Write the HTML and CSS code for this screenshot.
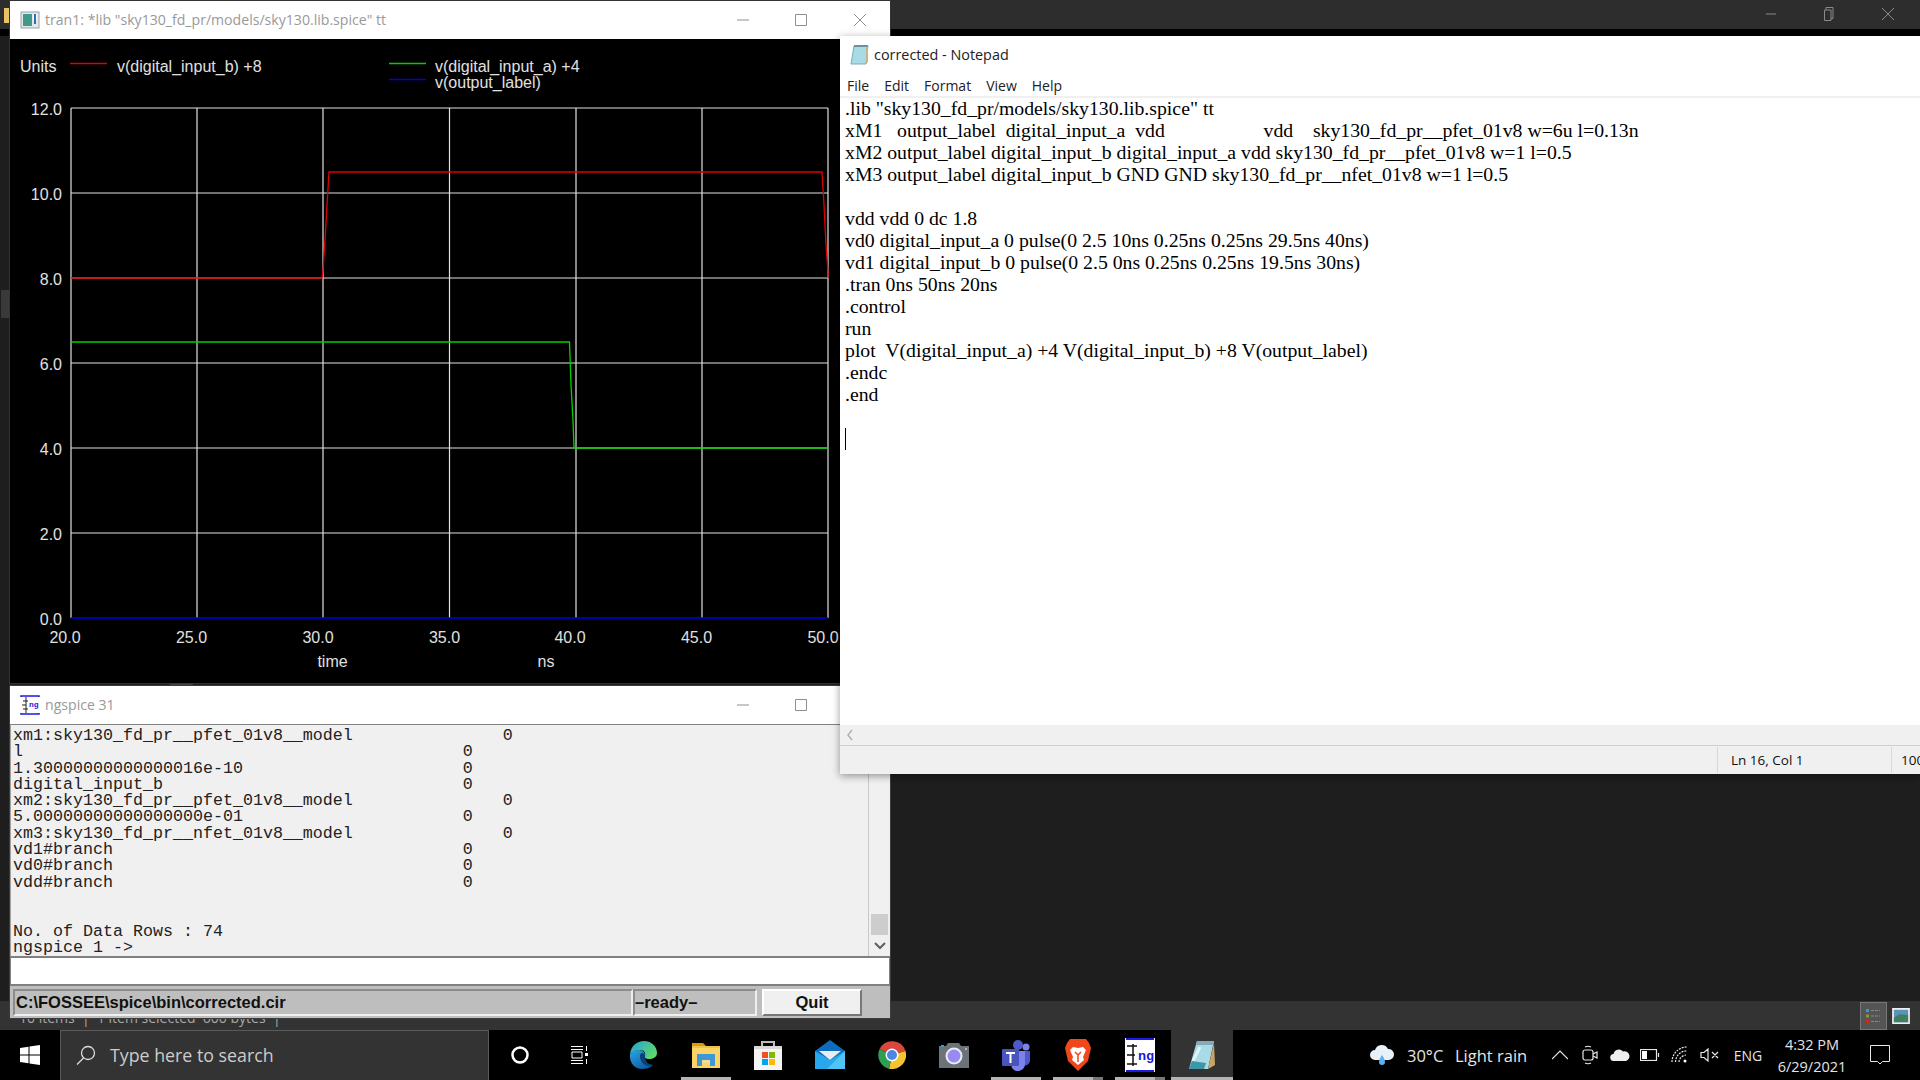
FILE: index.html
```html
<!DOCTYPE html>
<html lang="en">
<head>
  <meta charset="UTF-8">
  <title>ngspice and Notepad</title>
  <link rel="stylesheet" href="styles.css">
</head>
<body>
<div class="desktop">

  <!-- explorer window sitting behind everything -->
  <div class="explorer">
    <div class="explorer-title">
      <svg class="ctl ctl-min" viewBox="0 0 12 12"><path d="M1 6h10" /></svg>
      <svg class="ctl ctl-restore" viewBox="0 0 12 14"><path d="M3 3V.5h7v11H8M1.500 3H8v10.500H1.500z" /></svg>
      <svg class="ctl ctl-close" viewBox="0 0 12 12"><path d="M0 0l12 12M12 0L0 12" /></svg>
    </div>
    <div class="explorer-strip"></div>
    <div class="explorer-side"><span class="side-folder"></span><span class="side-thumb"></span><span class="side-grip"></span></div>
    <div class="explorer-status">
      <span class="status-text">10 items &nbsp;|&nbsp; 1 item selected &nbsp;600 bytes &nbsp;|</span>
      <span class="view-btn view-on">
        <svg viewBox="0 0 20 20" width="20" height="20"><rect x="3" y="3" width="3" height="3" fill="#4a90d0"/><rect x="3" y="8.5" width="3" height="3" fill="#8a9a30"/><rect x="3" y="14" width="3" height="3" fill="#c03020"/><path d="M8 4.500h9M8 10h9M8 15.500h9" stroke="#888" stroke-dasharray="3 1"/></svg>
      </span>
      <span class="view-btn view-pic">
        <svg viewBox="0 0 20 18" width="18" height="16"><rect width="20" height="18" fill="#eee"/><rect x="2" y="2" width="16" height="14" fill="#5a94b8"/><path d="M2 11l6-4 10 1v8H2z" fill="#3f7f60"/></svg>
      </span>
    </div>
  </div>

  <!-- plot window -->
  <div class="win win-plot">
    <div class="titlebar">
      <svg class="title-icon" viewBox="0 0 20 20"><rect x="1" y="2" width="18" height="16" fill="#e4e6e8" stroke="#9aa2a8"/><rect x="3" y="4" width="9" height="12" fill="#3f9a8c"/><rect x="13" y="4" width="4" height="6" fill="#fff"/><rect x="14" y="4" width="2" height="10" fill="#2c6fb0"/></svg>
      <span class="title-text">tran1: *lib "sky130_fd_pr/models/sky130.lib.spice" tt</span>
      <svg class="ctl ctl-min dark" viewBox="0 0 12 12"><path d="M0 6h12" /></svg>
      <svg class="ctl ctl-max dark" viewBox="0 0 12 12"><path d="M.5.500h11v11H.5z" /></svg>
      <svg class="ctl ctl-x dark" viewBox="0 0 12 12"><path d="M0 0l12 12M12 0L0 12" /></svg>
    </div>
    <svg class="plot" viewBox="10 39 880 644" width="880" height="644">
      <g class="grid">
        <path d="M71 108H828M71 193H828M71 278H828M71 363H828M71 448H828M71 533H828" />
        <path d="M71 108V618M197 108V618M323 108V618M449.500 108V618M576 108V618M702 108V618M828 108V618" />
      </g>
      <path class="trace red" d="M71 278H322L323 270 325 240 327 205 329 172H822L824 205 826 245 828 272V278" />
      <path class="trace green" d="M71 342H569.500L571 385 573 420 574 448H828" />
      <path class="trace blue" d="M71 618H828" />
      <path class="trace red" d="M70 63.500h37" />
      <path class="trace green" d="M389 63.500h37" />
      <path class="trace blue" d="M389 79.500h37" />
      <text class="lbl" x="20" y="72">Units</text>
      <text class="lbl" x="117" y="72">v(digital_input_b) +8</text>
      <text class="lbl" x="435" y="72">v(digital_input_a) +4</text>
      <text class="lbl" x="435" y="88">v(output_label)</text>
      <g class="ytick">
        <text x="62" y="115">12.0</text>
        <text x="62" y="200">10.0</text>
        <text x="62" y="285">8.0</text>
        <text x="62" y="370">6.0</text>
        <text x="62" y="455">4.0</text>
        <text x="62" y="540">2.0</text>
        <text x="62" y="625">0.0</text>
      </g>
      <g class="xtick">
        <text x="65" y="643">20.0</text>
        <text x="191.500" y="643">25.0</text>
        <text x="318" y="643">30.0</text>
        <text x="444.500" y="643">35.0</text>
        <text x="570" y="643">40.0</text>
        <text x="696.500" y="643">45.0</text>
        <text x="823" y="643">50.0</text>
        <text x="332.500" y="667">time</text>
        <text x="546" y="667">ns</text>
      </g>
    </svg>
  </div>

  <!-- ngspice console window -->
  <div class="win win-console">
    <div class="titlebar">
      <svg class="title-icon" viewBox="0 0 20 20"><path d="M1 2V1h18v1M1 18v1h18v-1" fill="none" stroke="#1a1ae0" stroke-width="1.500"/><path d="M6 2v16M3 6h5M2 10h4M3 14h5" stroke="#222" fill="none"/><text class="ng-mini" x="9" y="12">ng</text></svg>
      <span class="title-text">ngspice 31</span>
      <svg class="ctl ctl-min dark" viewBox="0 0 12 12"><path d="M0 6h12" /></svg>
      <svg class="ctl ctl-max dark" viewBox="0 0 12 12"><path d="M.5.500h11v11H.5z" /></svg>
    </div>
    <div class="console-row">
<pre class="console">xm1:sky130_fd_pr__pfet_01v8__model               0
l                                            0
1.30000000000000016e-10                      0
digital_input_b                              0
xm2:sky130_fd_pr__pfet_01v8__model               0
5.00000000000000000e-01                      0
xm3:sky130_fd_pr__nfet_01v8__model               0
vd1#branch                                   0
vd0#branch                                   0
vdd#branch                                   0


No. of Data Rows : 74
ngspice 1 -&gt;</pre>
      <div class="scrollbar">
        <span class="thumb"></span>
        <svg class="arrow" viewBox="0 0 12 8" width="12" height="8"><path d="M1 1l5 5 5-5" /></svg>
      </div>
    </div>
    <div class="cmd-input"></div>
    <div class="cmd-status">
      <span class="field field-path">C:\FOSSEE\spice\bin\corrected.cir</span>
      <span class="field field-state">–ready–</span>
      <span class="quit">Quit</span>
    </div>
  </div>

  <!-- notepad window -->
  <div class="win win-notepad">
    <div class="np-title">
      <svg class="np-icon" viewBox="0 0 20 22"><path d="M4 3h14l-2 18H1z" fill="#a9dbe6" stroke="#7da9b4"/><path d="M4 2h14v2H4z" fill="#6f8f9f"/><path d="M16 5l2-2v16l-2 2z" fill="#c9b48a"/></svg>
      <span>corrected - Notepad</span>
    </div>
    <div class="np-menu">
      <span>File</span><span>Edit</span><span>Format</span><span>View</span><span>Help</span>
    </div>
<pre class="np-text">.lib "sky130_fd_pr/models/sky130.lib.spice" tt
xM1   output_label  digital_input_a  vdd                    vdd    sky130_fd_pr__pfet_01v8 w=6u l=0.13n
xM2 output_label digital_input_b digital_input_a vdd sky130_fd_pr__pfet_01v8 w=1 l=0.5
xM3 output_label digital_input_b GND GND sky130_fd_pr__nfet_01v8 w=1 l=0.5

vdd vdd 0 dc 1.8
vd0 digital_input_a 0 pulse(0 2.5 10ns 0.25ns 0.25ns 29.5ns 40ns)
vd1 digital_input_b 0 pulse(0 2.5 0ns 0.25ns 0.25ns 19.5ns 30ns)
.tran 0ns 50ns 20ns
.control
run
plot  V(digital_input_a) +4 V(digital_input_b) +8 V(output_label)
.endc
.end

<span class="caret"></span></pre>
    <div class="np-hscroll">
      <svg viewBox="0 0 8 12" width="8" height="12"><path d="M6 1L2 6l4 5" /></svg>
    </div>
    <div class="np-status">
      <span class="np-cell">Ln 16, Col 1</span>
      <span class="np-zoom">100%</span>
    </div>
  </div>

  <!-- taskbar -->
  <div class="taskbar">
    <div class="start">
      <svg viewBox="0 0 20 20" width="20" height="20"><path d="M0 3l8.500-1.200v7.700H0zM9.500 1.600L20 0v9.500H9.500zM0 10.500h8.500v7.700L0 17zM9.500 10.500H20V20L9.500 18.400z" fill="#fff"/></svg>
    </div>
    <div class="search">
      <svg viewBox="0 0 20 20" width="20" height="20"><circle cx="12" cy="8" r="6.500" fill="none" stroke="#ddd" stroke-width="1.300"/><path d="M7.500 13L1 19.500" stroke="#ddd" stroke-width="1.300"/></svg>
      <span>Type here to search</span>
    </div>
    <div class="tile"><svg viewBox="0 0 20 20" width="20" height="20"><circle cx="10" cy="10" r="7.500" fill="none" stroke="#fff" stroke-width="2.500"/></svg></div>
    <div class="tile tile-taskview"><svg viewBox="0 0 20 20" width="20" height="20"><path d="M1 1.500h12M1 4.500h12M1 15.500h12M1 18.500h12" stroke="#fff"/><path d="M2 7h10v6H2z" fill="none" stroke="#fff"/><path d="M16.500 1v5M16.500 14v5" stroke="#fff"/><rect x="15" y="8" width="3" height="3" fill="#fff"/></svg></div>
    <div class="tile tile-edge">
      <svg viewBox="0 0 30 30" width="30" height="30">
        <defs>
          <linearGradient id="edgeA" x1="0" y1="0" x2="1" y2="0.600"><stop offset="0" stop-color="#1fa3d8"/><stop offset="1" stop-color="#5fd86c"/></linearGradient>
          <linearGradient id="edgeB" x1="0" y1="0" x2="0.600" y2="1"><stop offset="0" stop-color="#2aa5e0"/><stop offset="1" stop-color="#0f5ea8"/></linearGradient>
        </defs>
        <path d="M2 14C3 6 9 1 16 1c8 0 13 6 13 12 0 4-4 6-8 6-3 0-5-1-4-3 1-3-1-6-5-6-4 0-8 2-10 4z" fill="url(#edgeA)"/>
        <path d="M2 14c2-3 6-4 9-4 4 0 6 3 6 6-1 4 2 9 8 9-3 3-7 4-11 4C7 29 1 23 2 14z" fill="url(#edgeB)"/>
        <path d="M12 16c0 5 3 9 8 10 2 .500 4 0 5-1-4 0-8-3-8-9-1-4-5-4-5 0z" fill="#0c3f78"/>
      </svg>
    </div>
    <div class="tile tile-open">
      <svg viewBox="0 0 30 28" width="30" height="28"><path d="M1 2h11l3 3H1z" fill="#d99a10"/><path d="M1 5h28v22H1z" fill="#fbd468"/><path d="M1 5h28v2H1z" fill="#f0c24a"/><path d="M6 25V13h18v12h-5v-6h-8v6z" fill="#3f97d8"/><path d="M11 19h8v3h-8z" fill="#f6dc8a"/></svg>
    </div>
    <div class="tile">
      <svg viewBox="0 0 30 32" width="30" height="32"><path d="M9 8V3h12v5" fill="none" stroke="#bcbcbc" stroke-width="2"/><path d="M1 7h28v24H1z" fill="#f4f4f4"/><path d="M1 7h28v3H1z" fill="#d8d8d8"/><rect x="9" y="13" width="6" height="6" fill="#f25022"/><rect x="16" y="13" width="6" height="6" fill="#7fba00"/><rect x="9" y="20" width="6" height="6" fill="#00a4ef"/><rect x="16" y="20" width="6" height="6" fill="#ffb900"/></svg>
    </div>
    <div class="tile">
      <svg viewBox="0 0 30 30" width="30" height="30"><path d="M0 11L15 0l15 11v18H0z" fill="#0f6cbd"/><path d="M4 11h22L15 20z" fill="#e8eef4"/><path d="M0 11l15 9 15-9v18H0z" fill="#28a8ea"/><path d="M30 11v18H12z" fill="#50c4f4"/></svg>
    </div>
    <div class="tile">
      <svg viewBox="0 0 28 28" width="28" height="28"><path d="M14 14L1.600 8A14 14 0 0 1 27.500 10z" fill="#d8483c"/><path d="M14 14l13.500-4A14 14 0 0 1 11 27.700z" fill="#f4c430"/><path d="M14 14l-3 13.700A14 14 0 0 1 1.600 8z" fill="#2f9e50"/><circle cx="14" cy="14" r="6.500" fill="#fff"/><circle cx="14" cy="14" r="5" fill="#4a86e8"/></svg>
    </div>
    <div class="tile">
      <svg viewBox="0 0 30 26" width="30" height="26"><path d="M0 4h7l2-3h11l2 3h8v22H0z" fill="#6b7278"/><rect x="2" y="3" width="3" height="2" fill="#2c9fe0"/><circle cx="15" cy="14" r="8.500" fill="#e8eef4"/><circle cx="15" cy="14" r="6.500" fill="#9a8af0"/><circle cx="27" cy="7" r="1" fill="#ccc"/></svg>
    </div>
    <div class="tile tile-open">
      <svg viewBox="0 0 30 32" width="30" height="32"><circle cx="25" cy="8" r="3.500" fill="#7b83eb"/><circle cx="17" cy="6" r="5" fill="#5059c9"/><path d="M22 12h7v10a5 5 0 0 1-7 4z" fill="#5059c9"/><path d="M9 12h15v12a7 7 0 0 1-14 2z" fill="#7b83eb"/><rect x="1" y="10" width="17" height="17" rx="1" fill="#4b53bc"/><path d="M5 14h9M9.500 14v10" stroke="#fff" stroke-width="2"/></svg>
    </div>
    <div class="tile tile-open tile-split">
      <svg viewBox="0 0 26 34" width="26" height="34"><path d="M5 1h16l3 4 2 5-3 13-10 10L3 23 0 10l2-5z" fill="#f1471d"/><path d="M8 9l5 1 5-1 3 3-3 7 1 3-6 5-6-5 1-3-3-7z" fill="#fff"/><path d="M10 14l3 3 3-3M13 17v7" stroke="#f1471d" fill="none" stroke-width="1.500"/></svg>
    </div>
    <div class="tile tile-open tile-split">
      <svg viewBox="0 0 30 34" width="30" height="34"><rect width="30" height="34" fill="#fff"/><path d="M1 1h28M1 33h28" stroke="#1a1ae0" stroke-width="2"/><path d="M8 6v22M2 8h10M2 17h8M2 26h10" stroke="#111" stroke-width="1.500" fill="none"/><text class="ng-big" x="13" y="22">ng</text></svg>
    </div>
    <div class="tile tile-active">
      <svg viewBox="0 0 28 32" width="28" height="32"><path d="M9 2h17l-6 28H1z" fill="#a9dbe6"/><path d="M9 2h17l-1 4H8z" fill="#88a9b8"/><path d="M5 22L12 8" stroke="#dff3f6" stroke-width="3"/><path d="M26 4l1 22-7 4z" fill="#c8a468"/><path d="M1 30l3-8 14 2-2 6z" fill="#3f96a8"/></svg>
    </div>

    <div class="tray">
      <svg class="tray-cloud" viewBox="0 0 26 24" width="26" height="24"><path d="M6 17a5 5 0 0 1 0-10 7 7 0 0 1 13-1 5.500 5.500 0 0 1 1 11z" fill="#e8f0f8"/><path d="M13 12c-2 3-3 5-3 7a3 3 0 0 0 6 0c0-2-1-4-3-7z" fill="#5ab0f0"/></svg>
      <span class="tray-temp">30°C</span>
      <span class="tray-cond">Light rain</span>
      <span class="slot"><svg viewBox="0 0 16 10" width="16" height="10"><path d="M0 9l8-8 8 8" /></svg></span>
      <span class="slot"><svg viewBox="0 0 16 20" width="16" height="20"><rect x="1" y="5" width="10" height="10" rx="2"/><path d="M11 9l4-2v6l-4-2M3 2c2-1 4-1 6 0M3 18c2 1 4 1 6 0"/></svg></span>
      <span class="slot"><svg viewBox="0 0 20 14" width="20" height="14"><path d="M4 13a3.500 3.500 0 0 1-.5-7A5.500 5.500 0 0 1 13 3.500 4.500 4.500 0 0 1 16 13z" fill="#eee" stroke="none"/></svg></span>
      <span class="slot"><svg viewBox="0 0 20 12" width="20" height="12"><rect x=".5" y=".5" width="16" height="11"/><rect x="2" y="2" width="5" height="8" fill="#fff" stroke="none"/><path d="M18.500 4v4" /></svg></span>
      <span class="slot"><svg viewBox="0 0 18 18" width="18" height="18"><path d="M1 16A15 15 0 0 1 16 1M4.500 16A11 11 0 0 1 16 5M8 16a7.500 7.500 0 0 1 7-7" stroke-dasharray="2 1"/><circle cx="14" cy="15" r="1.500" fill="#fff" stroke="none"/></svg></span>
      <span class="slot"><svg viewBox="0 0 20 14" width="20" height="14"><path d="M1 4.500h3L8 1v12L4 9.500H1zM12 4l6 6M18 4l-6 6"/></svg></span>
      <span class="tray-lang">ENG</span>
      <span class="clock"><span>4:32 PM</span><span>6/29/2021</span></span>
      <span class="notify"><svg viewBox="0 0 20 20" width="20" height="20"><path d="M.5.500h19v16h-7l-2.500 2.500-2.500-2.500h-7z" /></svg></span>
    </div>
  </div>
</div>
</body>
</html>
```

FILE: styles.css
```css
html, body {
  margin: 0;
  padding: 0;
  background: #1e1e1e;
}
.desktop {
  position: relative;
  width: 1920px;
  height: 1080px;
  overflow: hidden;
  background: #1e1e1e;
  font-family: "Open Sans", "Liberation Sans", sans-serif;
}

/* window controls */
.ctl {
  width: 12px;
  height: 12px;
  fill: none;
  stroke: #8a8a8a;
  stroke-width: 1;
  flex: none;
}
.ctl.dark {
  stroke: #8f8f8f;
}

/* explorer behind */
.explorer {
  position: absolute;
  inset: 0 0 50px 0;
  display: flex;
  flex-direction: column;
}
.explorer-title {
  height: 29px;
  background: #2d2d2d;
  position: relative;
}
.explorer-title .ctl {
  position: absolute;
  top: 8px;
}
.ctl-min { left: 1765px; }
.explorer-title .ctl-restore { left: 1823px; top: 7px; height: 14px; }
.ctl-close { left: 1882px; }
.explorer-strip {
  height: 7px;
  background: #000;
}
.explorer-side {
  flex: 1;
  position: relative;
}
.side-folder {
  position: absolute;
  left: 4px;
  top: -28px;
  width: 5px;
  height: 15px;
  background: #e8c36a;
}
.side-thumb {
  position: absolute;
  left: 1px;
  top: 254px;
  width: 8px;
  height: 28px;
  background: #3a3a3a;
}
.side-grip {
  position: absolute;
  left: 170px;
  top: 647px;
  width: 23px;
  height: 3px;
  background: #444;
}
.explorer-status {
  height: 29px;
  flex: none;
  background: #333;
  color: #a8a8a8;
  font-size: 14px;
  display: flex;
  align-items: center;
  justify-content: flex-end;
  position: relative;
  padding-right: 8px;
}
.status-text {
  position: absolute;
  left: 19px;
  top: 7px;
  line-height: 20px;
  white-space: pre;
}
.view-btn {
  width: 27px;
  height: 28px;
  display: flex;
  align-items: center;
  justify-content: center;
}
.view-on {
  background: #555;
  border: 1px solid #777;
  box-sizing: border-box;
  justify-content: flex-start;
  padding-left: 2px;
}
.view-pic {
  width: 23px;
  margin-left: 2px;
}

/* app windows */
.win {
  position: absolute;
  display: flex;
  flex-direction: column;
}
.win-plot {
  left: 10px;
  top: 1px;
  width: 880px;
  height: 682px;
  background: #000;
  box-shadow: 0 0 0 1px #333;
}
.win-console {
  left: 10px;
  top: 686px;
  width: 880px;
  height: 332px;
  background: #f0f0f0;
  box-shadow: 0 0 0 1px #3c3c3c;
}
.win-notepad {
  left: 840px;
  top: 36px;
  width: 1080px;
  height: 738px;
  background: #fff;
  box-shadow: 0 2px 8px rgba(0, 0, 0, 0.4);
}
.titlebar {
  height: 38px;
  flex: none;
  background: #fff;
  display: flex;
  align-items: center;
  padding-left: 10px;
  position: relative;
}
.title-icon {
  width: 20px;
  height: 20px;
  margin-right: 5px;
}
.title-text {
  color: #999;
  font-size: 14.100px;
  white-space: pre;
  position: relative;
  top: -1px;
}
.titlebar .ctl {
  position: absolute;
  top: 13px;
}
.titlebar .ctl-min { left: 727px; }
.ctl-max { left: 785px; }
.ctl-x { left: 844px; }
.ng-mini {
  font: bold 8px "Liberation Mono", monospace;
  fill: #1a1ae0;
}
.ng-big {
  font: bold 13.500px "Liberation Mono", monospace;
  fill: #1a1ae0;
}

/* plot */
.plot {
  display: block;
}
.grid path {
  fill: none;
  stroke: #e0e0e0;
  stroke-width: 1.200;
}
.trace {
  fill: none;
  stroke-width: 1.300;
}
.red { stroke: #e00000; }
.green { stroke: #00d000; }
.blue { stroke: #0000e0; stroke-width: 1.600; }
.lbl {
  font: 16px "Liberation Sans", sans-serif;
  fill: #e0e0e0;
}
.ytick text {
  font: 16px "Liberation Sans", sans-serif;
  fill: #e0e0e0;
  text-anchor: end;
}
.xtick text {
  font: 16px "Liberation Sans", sans-serif;
  fill: #e0e0e0;
  text-anchor: middle;
}

/* ngspice console */
.console-row {
  flex: 1;
  display: flex;
  min-height: 0;
  border-top: 1px solid #808080;
  border-left: 1px solid #a0a0a0;
}
.console {
  flex: 1;
  margin: 0;
  padding: 3px 0 0 2px;
  font: 16.670px/16.300px "Liberation Mono", monospace;
  color: #222;
  overflow: hidden;
}
.scrollbar {
  width: 21px;
  flex: none;
  background: #f0f0f0;
  border-left: 1px solid #c8c8c8;
  position: relative;
}
.thumb {
  position: absolute;
  left: 2px;
  top: 189px;
  width: 17px;
  height: 21px;
  background: #cdcdcd;
}
.arrow {
  position: absolute;
  left: 5px;
  top: 217px;
  fill: none;
  stroke: #606060;
  stroke-width: 2;
}
.cmd-input {
  height: 26px;
  flex: none;
  background: #fff;
  border: 1px solid #808080;
  border-width: 2px 1px 2px 1px;
}
.cmd-status {
  height: 32px;
  box-sizing: border-box;
  flex: none;
  background: #bebebe;
  display: flex;
  align-items: stretch;
  padding: 3px 28px 2px 3px;
  font: bold 16.500px "Liberation Sans", sans-serif;
  color: #111;
}
.field {
  display: flex;
  align-items: center;
  border: 2px solid;
  border-color: #8c8c8c #eee #eee #8c8c8c;
  white-space: pre;
}
.field-path {
  width: 620px;
  box-sizing: border-box;
  padding-left: 1px;
}
.field-state {
  width: 124px;
  box-sizing: border-box;
  font-weight: bold;
}
.quit {
  width: 100px;
  margin-left: 5px;
  box-sizing: border-box;
  background: #f0f0f0;
  border: 2px solid;
  border-color: #fff #777 #777 #fff;
  display: flex;
  align-items: center;
  justify-content: center;
}

/* notepad */
.np-title {
  height: 38px;
  flex: none;
  display: flex;
  align-items: center;
  padding: 0 0 2px 10px;
  box-sizing: border-box;
  font-size: 14.400px;
  color: #222;
}
.np-icon {
  width: 20px;
  height: 22px;
  margin-right: 4px;
}
.np-menu {
  height: 22px;
  flex: none;
  display: flex;
  align-items: center;
  gap: 15px;
  padding-left: 7px;
  font-size: 14px;
  color: #222;
  border-bottom: 2px solid #f0f0f0;
}
.np-text {
  flex: 1;
  margin: 0;
  padding: 0 0 1px 5px;
  font: 19.750px/22px "Liberation Serif", serif;
  color: #000;
  overflow: hidden;
  transform: translateY(-1px);
}
.caret {
  display: inline-block;
  width: 1px;
  height: 22px;
  background: #000;
  vertical-align: top;
  position: relative;
  top: 1px;
}
.np-hscroll {
  height: 20px;
  flex: none;
  background: #f0f0f0;
  display: flex;
  align-items: center;
  padding-left: 6px;
  border-bottom: 1px solid #d0d0d0;
}
.np-hscroll path {
  fill: none;
  stroke: #b0b0b0;
  stroke-width: 1.500;
}
.np-status {
  height: 28px;
  flex: none;
  box-sizing: border-box;
  background: #f0f0f0;
  display: flex;
  justify-content: flex-end;
  align-items: center;
  font-size: 13.500px;
  color: #111;
  overflow: hidden;
}
.np-cell {
  width: 175px;
  flex: none;
  box-sizing: border-box;
  padding-left: 13px;
  line-height: 26px;
  border-left: 1px solid #d8d8d8;
  border-right: 1px solid #d8d8d8;
}
.np-zoom {
  width: 28px;
  flex: none;
  padding-left: 9px;
  box-sizing: border-box;
  white-space: nowrap;
  overflow: hidden;
}

/* taskbar */
.taskbar {
  position: absolute;
  left: 0;
  right: 0;
  bottom: 0;
  height: 50px;
  background: #000;
  display: flex;
  color: #e8e8e8;
}
.start {
  width: 60px;
  flex: none;
  display: flex;
  align-items: center;
  justify-content: center;
}
.search {
  width: 429px;
  flex: none;
  box-sizing: border-box;
  background: #333;
  border: 1px solid #5a5a5a;
  border-bottom: none;
  display: flex;
  align-items: center;
  gap: 14px;
  padding: 0 0 2px 15px;
  font-size: 17.800px;
  color: #ccc;
}
.tile {
  width: 62px;
  flex: none;
  box-sizing: border-box;
  display: flex;
  align-items: center;
  justify-content: center;
  position: relative;
}
.tile-taskview svg {
  margin-right: 4px;
}
.tile-edge svg {
  margin-right: 2px;
}
.tile-open::after {
  content: "";
  position: absolute;
  left: 6px;
  right: 6px;
  bottom: 0;
  height: 3px;
  background: #b4b4b4;
}
.tile-split::before {
  content: "";
  position: absolute;
  right: 6px;
  bottom: 0;
  width: 10px;
  height: 3px;
  background: #777;
  z-index: 1;
}
.tile-active {
  background: #333;
}
.tile-active::after {
  content: "";
  position: absolute;
  left: 0;
  right: 0;
  bottom: 0;
  height: 3px;
  background: #b4b4b4;
}
.tray {
  margin-left: auto;
  width: 551px;
  flex: none;
  display: flex;
  align-items: center;
  font-size: 16.500px;
  color: #e4e4e4;
}
.tray-cloud {
  margin-right: 12px;
}
.tray-temp {
  width: 48px;
  flex: none;
  white-space: nowrap;
}
.tray-cond {
  width: 90px;
  flex: none;
  white-space: nowrap;
}
.slot {
  width: 30px;
  flex: none;
  display: flex;
  align-items: center;
  justify-content: center;
}
.slot svg {
  fill: none;
  stroke: #e8e8e8;
  stroke-width: 1.200;
}
.tray-lang {
  width: 46px;
  flex: none;
  font-size: 14px;
  text-align: center;
}
.clock {
  width: 82px;
  flex: none;
  display: flex;
  flex-direction: column;
  align-items: center;
  gap: 3px;
  font-size: 14.500px;
  line-height: 19px;
}
.notify {
  width: 53px;
  flex: none;
  display: flex;
  justify-content: center;
  align-items: center;
}
.notify svg {
  fill: none;
  stroke: #e8e8e8;
}
```
